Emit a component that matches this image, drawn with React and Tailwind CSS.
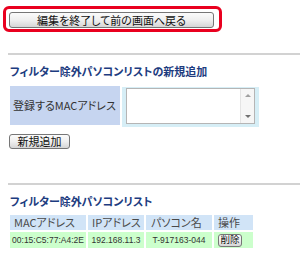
import React from "react";

const FONT = "font-['Noto_Sans_CJK_JP',sans-serif] [font-feature-settings:'palt']";

const btn =
  "rounded-[3px] border border-[#767676] bg-gradient-to-b from-[#fbfbfb] via-[#efefef] to-[#d6d6d6] text-[#111] leading-none flex items-center justify-center whitespace-nowrap";

const rows = [
  { mac: "00:15:C5:77:A4:2E", ip: "192.168.11.3", name: "T-917163-044" },
];

export default function App() {
  return (
    <div className={`w-[300px] h-[270px] overflow-hidden bg-white pl-[8px] pt-[6px] ${FONT}`}>
      {/* back button, highlighted */}
      <div className="-ml-[5px] w-[219px] rounded-[6px] border-[3px] border-[#e9001f] pl-[3px] pr-[5px] pt-[3px] pb-[1px]">
        <button className={`${btn} w-[205px] h-[16px] text-[11px]`}>
          編集を終了して前の画面へ戻る
        </button>
      </div>

      <div className="mt-[21px] h-[2px] w-[292px] bg-[#d2d2d2]" />

      <h2 className="mt-[9px] ml-[2px] text-[11px] leading-[14px] font-bold text-[#1d3c80] whitespace-nowrap">
        フィルター除外パソコンリストの新規追加
      </h2>

      <div className="mt-[8px] ml-[2px] flex gap-[2px]">
        <div className="w-[110px] h-[39px] bg-[#c6d5f0] flex items-center pl-[3px] text-[11px] text-[#333] whitespace-nowrap">
          登録するMACアドレス
        </div>
        <div className="w-[137px] h-[40px] mt-[1px] bg-[#d6eef6] pl-[4px] pt-[1px]">
          <div className="w-[129px] h-[36px] bg-white border border-[#b5b5b5] flex">
            <textarea className="flex-1 resize-none outline-none text-[11px] bg-transparent" />
            <div className="w-[14px] flex flex-col justify-between items-center py-[5px] bg-[#f6f6f6] border-l border-[#e4e4e4]">
              <span className="w-0 h-0 border-x-[3px] border-x-transparent border-b-[3px] border-b-[#a0a0a0]" />
              <span className="w-0 h-0 border-x-[3px] border-x-transparent border-t-[3px] border-t-[#707070]" />
            </div>
          </div>
        </div>
      </div>

      <button className={`${btn} mt-[7px] ml-[1px] w-[61px] h-[15px] text-[11px]`}>
        新規追加
      </button>

      <div className="mt-[34px] h-[2px] w-[292px] bg-[#d2d2d2]" />

      <h2 className="mt-[9px] ml-[2px] text-[11px] leading-[14px] font-bold text-[#1d3c80] whitespace-nowrap">
        フィルター除外パソコンリスト
      </h2>

      <div className="mt-[7px] ml-[2px] grid grid-cols-[76px_56px_66px_39px] gap-[2px] text-[#4a4a4a]">
        <div className="h-[15px] bg-[#d1e4f7] pl-[4px] text-[11px] leading-[15px] whitespace-nowrap">MACアドレス</div>
        <div className="h-[15px] bg-[#d1e4f7] pl-[4px] text-[11px] leading-[15px] whitespace-nowrap">IPアドレス</div>
        <div className="h-[15px] bg-[#d1e4f7] pl-[5px] text-[11px] leading-[15px] whitespace-nowrap">パソコン名</div>
        <div className="h-[15px] bg-[#d1e4f7] pl-[4px] text-[11px] leading-[15px] whitespace-nowrap">操作</div>
        {rows.map((r) => (
          <React.Fragment key={r.mac}>
            <div className="h-[16px] bg-[#ccffcc] flex items-center justify-center text-[8.5px] text-[#333] font-['Liberation_Sans',sans-serif] whitespace-nowrap">{r.mac}</div>
            <div className="h-[16px] bg-[#ccffcc] flex items-center justify-center text-[8.5px] text-[#333] font-['Liberation_Sans',sans-serif] whitespace-nowrap">{r.ip}</div>
            <div className="h-[16px] bg-[#ccffcc] flex items-center justify-center text-[8.5px] text-[#333] font-['Liberation_Sans',sans-serif] whitespace-nowrap">{r.name}</div>
            <div className="h-[16px] bg-[#ccffcc] flex items-center pl-[4px]">
              <button className={`${btn} w-[24px] h-[13px] text-[9.5px]`}>削除</button>
            </div>
          </React.Fragment>
        ))}
      </div>
    </div>
  );
}
